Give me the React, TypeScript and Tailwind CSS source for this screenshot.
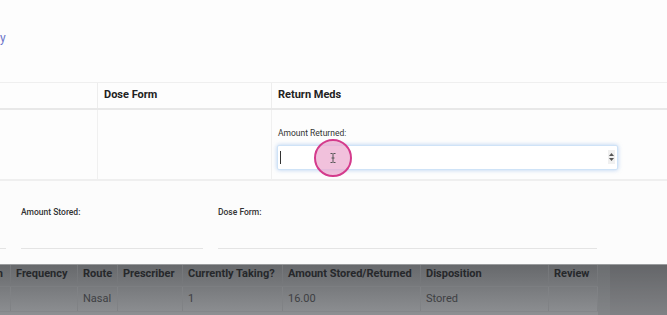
import React from 'react'

const cols = [
    { w: 'w-[11px]', head: 'n', body: '' },
    { w: 'w-[67px]', head: 'Frequency', body: '' },
    { w: 'w-[40px]', head: 'Route', body: 'Nasal' },
    { w: 'w-[65px]', head: 'Prescriber', body: '' },
    { w: 'w-[100px]', head: 'Currently Taking?', body: '1' },
    { w: 'w-[138px]', head: 'Amount Stored/Returned', body: '16.00' },
    { w: 'w-[128px]', head: 'Disposition', body: 'Stored' },
    { w: 'w-[49px]', head: 'Review', body: '' },
]

export default function App() {
    return (
        <div className="relative w-[667px] h-[315px] overflow-hidden bg-[#fdfdfd] font-['Roboto',sans-serif]">
            {/* modal top */}
            <div className="h-[82px] pt-[25px]">
                <span className="text-[12px] text-[#6a74c9] leading-none">y</span>
            </div>

            <div className="border-t border-[#efefef]">
                <div className="flex h-[27px] border-b-2 border-[#e8e8e8] text-[11px] font-bold text-[#222]">
                    <div className="w-[98px] border-r border-[#ededed]" />
                    <div className="w-[174px] border-r border-[#ededed] flex items-center pl-[6px]">Dose Form</div>
                    <div className="flex-1 flex items-center pl-[6px]">Return Meds</div>
                </div>
                <div className="flex h-[71px] border-b-2 border-[#efefef]">
                    <div className="w-[98px] border-r border-[#f0f0f0]" />
                    <div className="w-[174px] border-r border-[#f0f0f0]" />
                    <div className="flex-1 pl-[5px] pt-[19px]">
                        <div className="text-[8.5px] text-[#333] leading-none ml-[1px] mb-[7px]">Amount Returned:</div>
                        <div className="w-[341px] h-[25px] bg-white border border-[#cfe3f7] rounded-[2px] shadow-[0_0_4px_rgba(120,170,230,0.55)] flex items-center pl-[2px] pr-[2px]">
                            <div className="w-px h-[13px] bg-[#333]" />
                            <div className="ml-auto w-[7px] h-[14px] bg-[#f0f0f0] flex flex-col items-center justify-center gap-[2px]">
                                <svg width="5" height="3" viewBox="0 0 5 3"><path d="M2.5 0L5 3H0z" fill="#555" /></svg>
                                <svg width="5" height="3" viewBox="0 0 5 3"><path d="M0 0h5L2.5 3z" fill="#555" /></svg>
                            </div>
                        </div>
                    </div>
                </div>
            </div>

            <div className="h-[83px] bg-[#fcfcfc] flex pt-[27px] text-[8.5px] font-medium text-[#333]">
                <div className="w-[21px] flex flex-col">
                    <div className="h-[9px]" />
                    <div className="mt-[31px] w-[6px] border-b border-[#e4e4e4]" />
                </div>
                <div className="w-[182px] flex flex-col">
                    <div className="leading-[9px]">Amount Stored:</div>
                    <div className="mt-[31px] border-b border-[#e4e4e4]" />
                </div>
                <div className="w-[15px]" />
                <div className="w-[379px] flex flex-col">
                    <div className="leading-[9px]">Dose Form:</div>
                    <div className="mt-[31px] border-b border-[#e4e4e4]" />
                </div>
            </div>

            {/* dimmed page behind */}
            <div className="h-[51px] flex bg-gradient-to-b from-[#67696c] to-[#8e9093] border-t border-[#9a9c9e]">
                <div className="flex flex-col w-[598px]">
                    <div className="flex h-[22px] border-b border-[#7c7e81] text-[11px] font-bold text-[#26282b]">
                        {cols.map((c, i) => (
                            <div key={i} className={`${c.w} border-r border-[#76787b] flex items-center pb-[3px] ${i === 0 ? 'justify-end pr-[7px]' : 'pl-[5px]'} whitespace-nowrap overflow-hidden`}>{c.head}</div>
                        ))}
                    </div>
                    <div className="flex h-[25px] border-b border-[#85878a] text-[11px] text-[#3e4043]">
                        {cols.map((c, i) => (
                            <div key={i} className={`${c.w} border-r border-[#808285] flex items-center pl-[5px] whitespace-nowrap`}>{c.body}</div>
                        ))}
                    </div>
                </div>
                <div className="w-[12px] bg-[#747679]/40" />
                <div className="flex-1 bg-[#5f6164]/30" />
            </div>

            {/* click indicator */}
            <div className="absolute left-[314px] top-[139px] w-[38px] h-[38px] rounded-full border-2 border-[#d43b8c] bg-[#eba7cd]/70 flex items-center justify-center">
                <svg width="6" height="10" viewBox="0 0 6 10"><path d="M0.5 0.5h2M3.5 0.5h2M3 0.5v9M0.5 9.5h2M3.5 9.5h2M1.5 5h3" stroke="#555" strokeWidth="1" fill="none" /></svg>
            </div>
        </div>
    )
}
